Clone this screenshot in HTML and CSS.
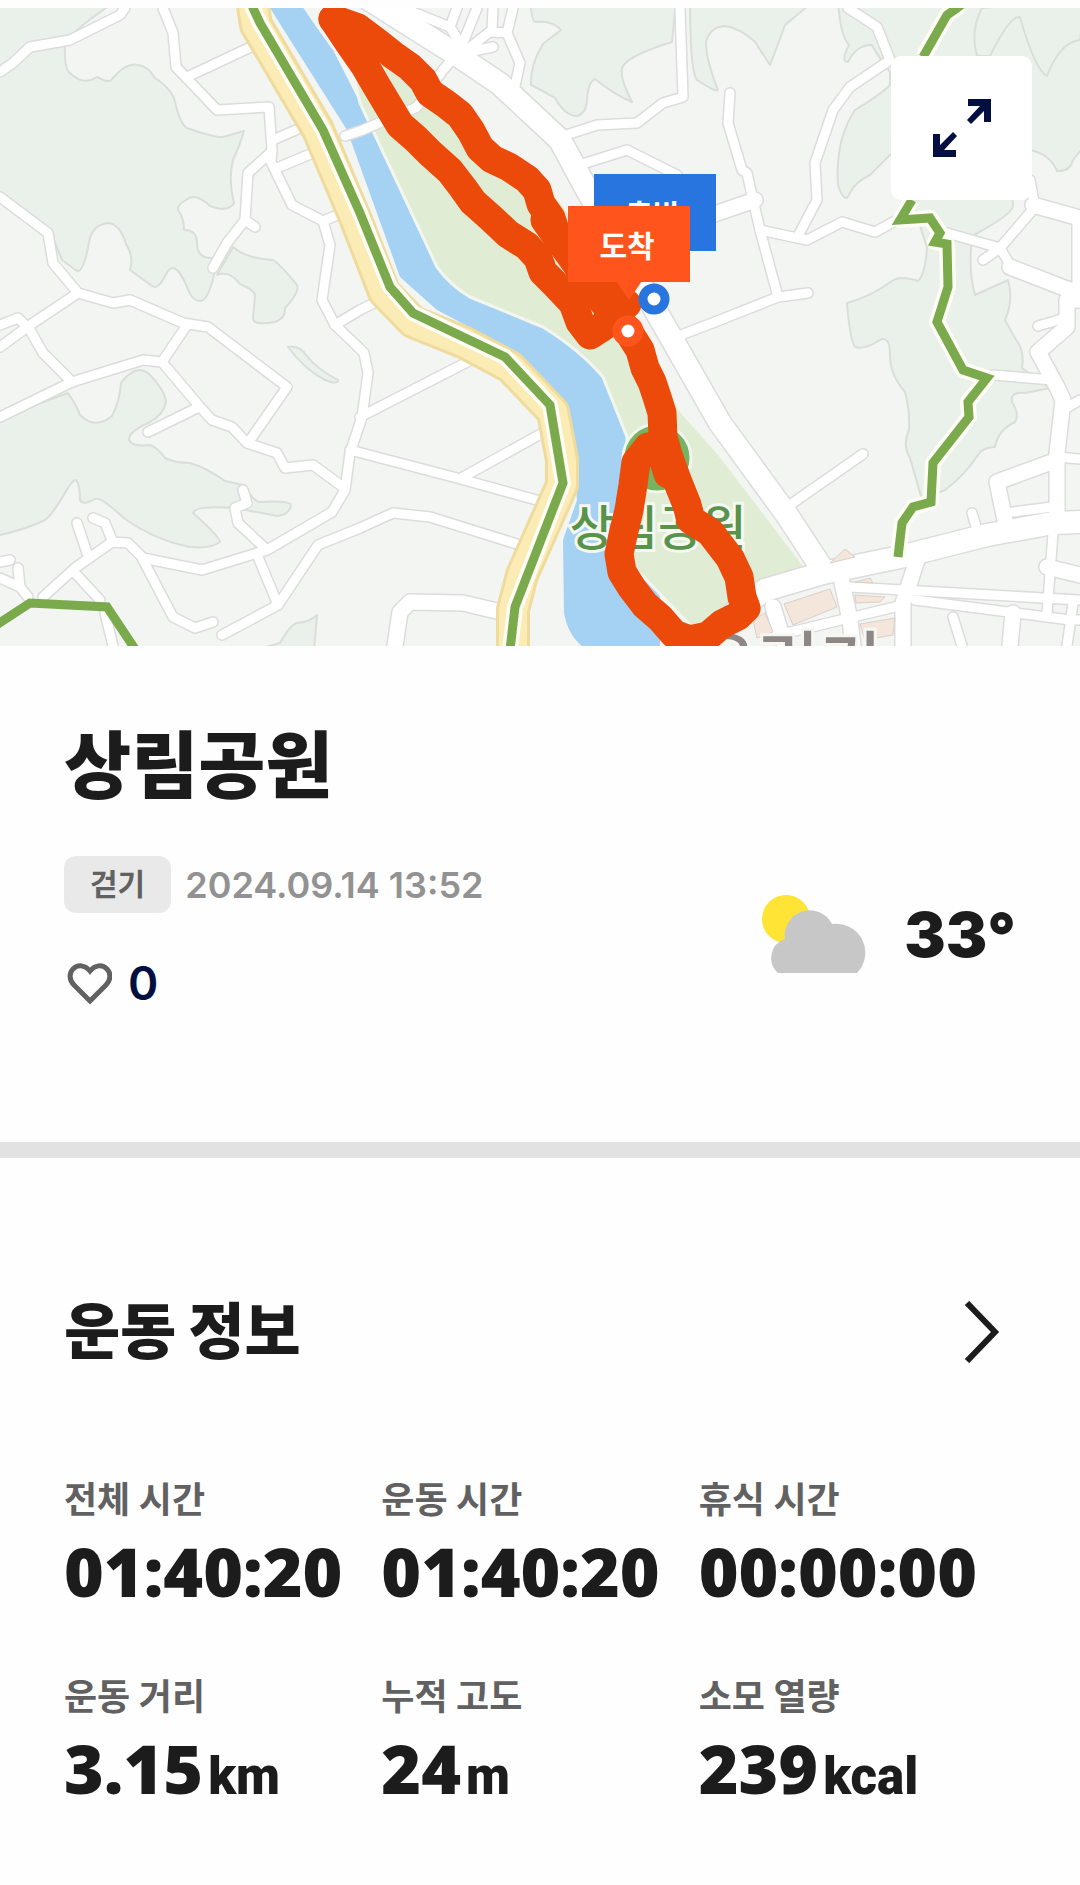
FILE: index.html
```html
<!DOCTYPE html>
<html lang="ko">
  <head>
    <meta charset="UTF-8" />
    <meta name="viewport" content="width=device-width, initial-scale=1.0" />
    <title>상림공원</title>
    <link rel="stylesheet" href="styles.css">
  </head>
  <body>
    <div class="map">
      <svg class="map-view" viewBox="0 8 1080 638" role="img" aria-label="상림공원 걷기 경로">
        <defs>
          <g id="roads-s">
            <path d="M0 72 13 63 30 47 70 40 120 15 125 8" />
            <path d="M163 8 173 33 176 67 217 110 269 107 272 150 271 162 292 205 323 221 330 245 322 300 335 325 358 347 364 353 368 373 362 417 350 453 345 490 332 512 267 550 202 570 143 558 128 543 112 542 75 568 43 597" />
            <path d="M187 77 255 45M273 140 305 126M277 168 320 150M323 221 345 212M335 325 360 310 384 298" />
            <path d="M270 153 248 173 245 220 227 243 213 268M245 220 255 227" />
            <path d="M0 197 48 233 53 263 78 293 113 303 130 300 183 323 208 327 287 387 248 443" />
            <path d="M78 293 30 325 0 347M0 325 18 318 30 330 43 353 72 382" />
            <path d="M0 417 72 382 143 360 162 362 200 407 212 420 232 427 247 443 277 453 285 468 313 465 343 487" />
            <path d="M162 362 187 325M197 408 148 432M243 490 247 503 235 508 238 523 267 550" />
            <path d="M77 523 87 553M93 518 105 523 112 540M75 573 100 600M143 560 173 617 195 628 213 622" />
            <path d="M258 557 278 605M222 635 278 605 318 545 360 528 393 513 430 517 520 545" />
            <path d="M0 562 10 560M0 578 20 587 28 597M18 568 20 587M105 613 113 646" />
            <path d="M350 450 457 478 540 501M463 477 548 430M360 417 475 358" />
            <path d="M345 136 360 131 417 107 443 70 460 50 477 8" />
            <path d="M403 8 450 27M457 8 450 27 460 43M493 8 492 30 463 53 493 47M492 32 507 33M513 8 507 33 520 63 513 95" />
            <path d="M560 137 597 125 637 123 663 103 683 97 680 8M573 167 627 150 677 175" />
            <path d="M730 93 728 123 742 170 747 173 753 200 760 230 778 297M808 293 778 297 720 320 668 340" />
            <path d="M760 230 797 238 807 240 842 222 875 232 897 220" />
            <path d="M797 238 817 200 815 163 833 110 850 87 890 60 877 27 848 8" />
            <path d="M947 233 1000 248 1035 207 1030 180M983 260 1000 248 1012 268M1038 326 1065 318M993 375 1053 380M1063 410 1080 400" />
            <path d="M863 454 787 507M972 513 978 533M1013 512 1060 506M1057 457 1080 459" />
            <path d="M850 587 1080 600M903 605 770 637M915 600 1070 620 1080 620M953 617 962 646M1053 533 1047 613M1073 603 1067 646" />
          </g>
          <g id="roads-m">
            <path d="M395 646 400 612 410 602 463 603 505 613" />
            <path d="M700 219 755 200M1010 267 1080 294M1033 205 1080 218M1080 220 1080 300 1067 300 1067 327 1038 352 1057 387 1063 400 1057 453 1057 520" />
            <path d="M1057 460 997 482 1007 530M917 560 903 603 903 646M840 573 850 620 853 646M773 607 785 646M1047 567 1080 575M1013 613 1010 646" />
          </g>
          <g id="roads-l">
            <path d="M370 0 457 55 500 84 560 140 587 190 657 313 720 423 787 515 823 570" />
            <path d="M735 612 765 590 823 573 900 557 987 535 1053 523 1080 522" />
          </g>
        </defs>

        <rect class="ground" y="8" width="1080" height="638" />

        <!-- hills -->
        <g class="hill">
          <path d="M-5 0 118 0Q90 18 75 32L65 42Q64 70 70 73Q83 86 97 77Q110 84 112 79Q126 62 138 65Q148 66 155 78Q173 90 175 102Q180 124 187 128Q215 138 223 137L244 131Q240 145 233 160Q228 180 234 203Q228 213 210 206Q195 192 186 200Q174 207 180 213Q184 220 184 230Q198 230 197 245Q198 258 211 258L217 260Q210 301 200 301Q192 301 187 287Q174 256 165 276Q158 290 152 286L130 270Q134 256 126 244Q120 224 108 223Q92 225 89 242Q84 272 77 271L62 260 50 230-5 190Z" />
          <path d="M217 275Q230 270 240 284Q254 290 255 295L253 318Q253 326 275 322Q286 318 285 308Q300 292 297 285Q280 264 273 260Q245 258 233 247Z" />
          <path d="M-5 420 68 393Q78 408 80 415Q95 430 112 416Q120 400 121 383Q135 364 148 373Q165 390 166 402Q164 414 150 422Q128 432 129 440Q132 447 150 445Q158 448 165 458Q175 463 190 463Q205 467 225 481L243 485Q252 498 258 502Q290 500 291 505Q290 514 278 516L235 508Q195 505 193 513Q220 537 220 542Q210 549 190 547Q155 540 125 519Q100 496 95 499Q83 506 80 500Q80 484 76 480Q72 480 65 493Q52 515 45 520Q25 530-5 536Z" />
          <path d="M530 0Q532 22 535 22Q553 20 561 30Q545 42 543 44Q530 65 531 85Q545 92 555 98Q565 116 577 116Q586 114 587 100Q588 82 595 79Q615 95 632 102Q618 75 623 66Q630 55 672 42L676 0Z" />
          <path d="M690 0Q690 72 697 80Q717 93 718 90Q706 60 706 42Q710 27 725 26Q740 28 755 42L770 65Q778 45 785 25L815 0Z" />
          <path d="M838 0Q840 35 849 45Q840 62 848 62Q856 45 872 45Q877 55 890 72L890 85Q880 95 855 110Q835 140 838 185Q845 206 850 193Q855 182 870 175L895 150 1030 150Q1050 154 1057 171Q1070 172 1073 160L1085 145 1085 0Z" />
          <path d="M912 200 927 248Q925 275 918 281Q900 275 892 281Q870 297 847 303Q850 340 855 347Q865 350 880 340Q890 335 890 355Q890 375 905 392Q910 410 909 430Q902 445 910 458L922 500 945 490Q965 475 978 455Q983 447 995 447Q998 430 1015 422Q1020 415 1012 402Q1010 391 1025 393L1050 388 1022 368Q1025 350 1015 338L1005 320Q1014 300 1008 280L975 295Q968 270 972 236Q1014 214 1013 205L1012 190Z" />
          <path d="M255 650 280 643Q290 625 297 623Q310 622 317 615L314 650Z" />
          <path d="M288 347Q300 345 306 355Q318 370 338 380Q338 385 325 380Q305 370 288 347Z" />
          <path d="M982 8Q970 30 977 56L990 56Q1010 15 1020 17Q1035 70 1047 76Q1060 42 1080 40L1085 0Z" />
        </g>

        <path class="river" d="M265 0 298 0Q318 30 333 50L360 103 437 267Q450 285 470 297L543 327Q580 350 603 377L627 437 660 470 660 646 582 646Q568 635 564 613L563 540 577 500 570 420 513 350 437 310 400 277 347 130Z" />
        <path class="park" d="M340 20 385 60 440 95 560 200 625 290 680 410 720 455 810 573 757 595 693 628 627 560 627 437 603 377Q580 350 543 327L470 297Q450 285 437 267L360 103Z" />

        <g class="casing">
          <use href="#roads-s" class="s" />
          <use href="#roads-m" class="m" />
          <use href="#roads-l" class="l" />
        </g>
        <g class="road">
          <use href="#roads-s" class="s" />
          <use href="#roads-m" class="m" />
          <use href="#roads-l" class="l" />
        </g>

        <g class="building">
          <path d="M784 604 830 589 837 607 793 625Z" />
          <path d="M830 563 845 549 855 557ZM855 582 870 578 873 583ZM855 595 885 597 880 602 856 603ZM860 624 895 618 893 635 865 640ZM753 620 765 613 773 632 757 638Z" />
        </g>

        <!-- riverside highway -->
        <path class="highway-edge" d="M252 0 256 25 318 130 356 220 384 292 413 322 465 343 510 367 553 412 562 460 562 485 522 575 513 610 513 650" />
        <path class="highway" d="M252 0 256 25 318 130 356 220 384 292 413 322 465 343 510 367 553 412 562 460 562 485 522 575 513 610 513 650" />
        <g id="trails">
          <path class="trail-edge" d="M253 0 253 8 260 23 323 130 360 213 390 287 413 313 505 357 550 405 563 483 515 607 510 650" />
          <path class="trail-edge" d="M957 0 957 8 947 15 923 57M912 200 900 220 930 218 940 233 935 242 947 244 948 287 937 322 963 370 987 378 968 402 969 417 933 463 931 502 913 507 902 523 898 557" />
          <path class="trail" d="M253 0 253 8 260 23 323 130 360 213 390 287 413 313 505 357 550 405 563 483 515 607 510 650" />
          <path class="trail" d="M-5 626 30 603 107 607 137 652M968 0 957 8 947 15 923 57M912 200 900 220 930 218 940 233 935 242 947 244 948 287 937 322 963 370 987 378 968 402 969 417 933 463 931 502 913 507 902 523 898 557" />
        </g>

        <circle class="park-pin" cx="657" cy="458" r="34" />
        <text class="park-name" x="658" y="545">상림공원</text>
        <text class="town-name" x="788" y="688">우리기</text>

        <!-- walked route -->
        <path class="route" d="M333 19 349 43 365 66 376 85 388 105 400 125 416 139 430 153 450 171 463 188 473 202 491 218 508 234 527 246 538 258 543 272 556 285 573 303 580 322 590 335 604 326 612 310 627 304" />
        <path class="route" d="M333 19 358 28 378 43 393 55 410 67 423 80 430 93 446 104 460 115 471 131 480 148 492 159 509 167 527 179 537 190 541 204 551 218 557 236 570 250 590 266 604 285 620 300" />
        <path class="route" d="M545 220 575 262 600 298 628 331 640 350 645 368 652 382 657 397 662 413 663 437 668 455 677 480 687 505 691 520 710 532 730 558 739 577 742 597 746 608 738 616 722 624 708 636 690 640 674 634 660 618 645 605 632 588 622 572 619 554 623 535 629 510 633 485 636 462 648 447 662 455 668 474" />

        <rect class="start" x="594" y="174" width="122" height="77" />
        <text class="flag-text" x="653" y="226">출발</text>
        <circle class="dot start-dot" cx="654" cy="299" r="11" />
        <rect class="finish" x="568" y="206" width="122" height="76" />
        <path class="finish" d="M616 281 629 300 642 281Z" />
        <text class="flag-text" x="627" y="257">도착</text>
        <circle class="dot finish-dot" cx="628" cy="331" r="11" />
      </svg>

      <button class="expand" type="button" aria-label="지도 확대">
        <svg viewBox="0 0 58 58" width="58" height="58">
          <path d="M35 0H58V23H51V12L38 25 34 21 47 7H35Z" />
          <path d="M23 58H0V35H7V46L20 33 24 37 11 51H23Z" />
        </svg>
      </button>
    </div>

    <section class="summary">
      <h1>상림공원</h1>
      <div class="summary-row">
        <div class="meta">
          <div class="meta-line">
            <span class="badge">걷기</span>
            <time datetime="2024-09-14T13:52">2024.09.14 13:52</time>
          </div>
          <button class="like" type="button" aria-label="좋아요 0">
            <svg viewBox="0 0 48 48" width="48" height="48">
              <path d="M26 42 10 26C5 21 5 14 9 10C14 5 21 6 26 12C31 6 38 5 43 10C47 14 47 21 42 26Z" />
            </svg>
            <span>0</span>
          </button>
        </div>
        <div class="weather">
          <svg viewBox="0 0 104 80" width="104" height="80" role="img" aria-label="구름 조금">
            <circle class="sun" cx="24" cy="24" r="24" />
            <path class="cloud" d="M16 78A20 20 0 0 1 23 44A25 25 0 0 1 70 29A29 29 0 0 1 95 78Z" />
          </svg>
          <span>33°</span>
        </div>
      </div>
    </section>

    <section class="workout">
      <a class="workout-head" href="#workout">
        <h2 id="workout">운동 정보</h2>
        <svg viewBox="0 0 36 62" width="36" height="62">
          <path d="M3 2 31 31 3 60" />
        </svg>
      </a>
      <dl class="stats">
        <div>
          <dt>전체 시간</dt>
          <dd>01:40:20</dd>
        </div>
        <div>
          <dt>운동 시간</dt>
          <dd>01:40:20</dd>
        </div>
        <div>
          <dt>휴식 시간</dt>
          <dd>00:00:00</dd>
        </div>
        <div>
          <dt>운동 거리</dt>
          <dd>3.15<span class="unit">km</span></dd>
        </div>
        <div>
          <dt>누적 고도</dt>
          <dd>24<span class="unit">m</span></dd>
        </div>
        <div>
          <dt>소모 열량</dt>
          <dd>239<span class="unit">kcal</span></dd>
        </div>
      </dl>
    </section>
  </body>
</html>
```
FILE: styles.css
```css
* {
  box-sizing: border-box;
}
body {
  margin: 0;
  padding-top: 8px;
  background-color: #fefefe;
  color: #1c1c1c;
  font-family: Inter, "Noto Sans CJK KR", sans-serif;
}
h1,
h2,
dl,
dd {
  margin: 0;
}
button {
  padding: 0;
  border: 0;
  background: none;
  font: inherit;
  cursor: pointer;
}

/* map */
.map {
  position: relative;
}
.map-view {
  display: block;
  width: 100%;
  height: auto;
}
.map-view path {
  stroke-linejoin: round;
}
.ground {
  fill: #f3f5f3;
}
.hill {
  fill: #eaf1ea;
  stroke: #d9dfd8;
  stroke-width: 2;
}
.river {
  fill: #a5d1f2;
}
.park {
  fill: #e0edd4;
  stroke: #f3f6ef;
  stroke-width: 3;
}
.casing,
.road {
  fill: none;
  stroke-linecap: round;
}
.casing {
  stroke: #dcdcdc;
}
.road {
  stroke: #fff;
}
.casing .s {
  stroke-width: 12;
}
.casing .m {
  stroke-width: 18;
}
.casing .l {
  stroke-width: 25;
}
.road .s {
  stroke-width: 9;
}
.road .m {
  stroke-width: 15;
}
.road .l {
  stroke-width: 22;
}
.building {
  fill: #f4e6db;
  stroke: #d9d0c9;
}
.highway-edge,
.highway,
.trail-edge,
.trail,
.route {
  fill: none;
}
.highway-edge {
  stroke: #efdb9e;
  stroke-width: 34;
}
.highway {
  stroke: #fbebb4;
  stroke-width: 28;
}
.trail-edge {
  stroke: #fdfdf6;
  stroke-width: 16;
}
.map-view .trail {
  stroke: #7aaa4b;
  stroke-width: 9;
  stroke-linejoin: miter;
}
.park-pin {
  fill: #77b461;
  stroke: #f1f7ec;
  stroke-width: 3;
}
.park-name,
.town-name {
  font-family: "Noto Sans CJK KR", sans-serif;
  font-weight: 500;
  text-anchor: middle;
  stroke: #f5f8f0;
  stroke-width: 6;
  paint-order: stroke;
}
.park-name {
  font-size: 48px;
  fill: #58934c;
}
.town-name {
  font-size: 68px;
  fill: #8f8786;
}
.route {
  stroke: #ec4a0a;
  stroke-width: 29;
  stroke-linecap: round;
}
.start {
  fill: #2975df;
}
.finish {
  fill: #ff541b;
}
.flag-text {
  font-family: "Noto Sans CJK KR", sans-serif;
  font-size: 30px;
  font-weight: 700;
  text-anchor: middle;
  fill: #fff;
}
.dot {
  fill: #fff;
  stroke-width: 9;
}
.start-dot {
  stroke: #2975df;
}
.finish-dot {
  stroke: #ff541b;
}
.expand {
  position: absolute;
  top: 48px;
  right: 48px;
  display: flex;
  align-items: center;
  justify-content: center;
  width: 141px;
  height: 144px;
  border-radius: 10px;
  background-color: #fff;
  fill: #030f40;
}

/* summary */
.summary {
  padding: 80px 64px 135px;
  border-bottom: 16px solid #e2e2e2;
}
h1 {
  font-size: 73px;
  font-weight: 900;
  line-height: 80px;
}
.summary-row {
  display: flex;
  align-items: center;
  justify-content: space-between;
  margin-top: 50px;
}
.meta-line {
  display: flex;
  align-items: center;
  gap: 14px;
}
.badge {
  padding: 0 26px;
  border-radius: 12px;
  background-color: #e9e9e9;
  color: #616161;
  font-size: 30px;
  font-weight: 700;
  line-height: 57px;
}
time {
  color: #929292;
  font-size: 36px;
  font-weight: 600;
}
.like {
  display: flex;
  align-items: center;
  gap: 16px;
  margin-top: 46px;
  color: #030f40;
  font-size: 46px;
  font-weight: 600;
  line-height: 48px;
}
.like svg {
  fill: none;
  stroke: #616161;
  stroke-width: 5;
}
.weather {
  display: flex;
  align-items: center;
  gap: 38px;
  padding-top: 6px;
  font-size: 62px;
  font-weight: 900;
}
.sun {
  fill: #ffe335;
}
.cloud {
  fill: #c7c7c7;
}

/* workout */
.workout {
  padding: 138px 64px 64px;
}
.workout-head {
  display: flex;
  align-items: center;
  justify-content: space-between;
  padding-right: 16px;
  color: inherit;
  text-decoration: none;
}
.workout-head svg {
  fill: none;
  stroke: #1c1c1c;
  stroke-width: 6;
}
h2 {
  font-size: 61px;
  font-weight: 900;
  line-height: 72px;
}
.stats {
  display: grid;
  grid-template-columns: repeat(3, 1fr);
  row-gap: 66px;
  margin-top: 108px;
}
dt {
  color: #616161;
  font-size: 36px;
  font-weight: 700;
  line-height: 48px;
}
dd {
  margin-top: 11px;
  font-family: "Open Sans", sans-serif;
  font-size: 68px;
  font-weight: 800;
  line-height: 72px;
  white-space: nowrap;
}
.unit {
  margin-left: 5px;
  font-family: Roboto, sans-serif;
  font-size: 51px;
  font-weight: 900;
}
```
